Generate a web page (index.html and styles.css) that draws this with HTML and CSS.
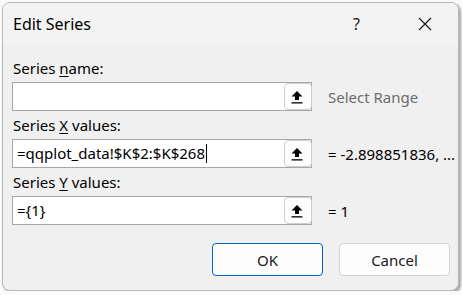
FILE: index.html
```html
<!DOCTYPE html>
<html lang="en">
<head>
	<meta charset="utf-8"/>
	<title>Edit Series</title>
	<link rel="stylesheet" href="styles.css">
</head>
<body>
	<div class="dialog">
		<div class="titlebar">
			<span class="title">Edit Series</span>
			<span class="help">?</span>
			<span class="close">
				<svg width="14" height="14" viewBox="0 0 14 14"><path d="M1 1L13 13M13 1L1 13" stroke="#1a1a1a" stroke-width="1.2" fill="none"/></svg>
			</span>
		</div>
		<div class="content">
			<div class="field">
				<label class="label">Series <u>n</u>ame:</label>
				<div class="row">
					<div class="input">
						<span class="text"></span>
						<span class="pick"><svg width="12" height="14" viewBox="0 0 12 14"><path d="M6 1L11.5 6.5H8V10H4V6.5H0.5Z" fill="#000"/><rect x="0.5" y="12.2" width="11" height="1.3" fill="#000"/></svg></span>
					</div>
					<span class="hint">Select Range</span>
				</div>
			</div>
			<div class="field">
				<label class="label">Series <u>X</u> values:</label>
				<div class="row">
					<div class="input">
						<span class="text">=qqplot_data!$K$2:$K$268<span class="caret"></span></span>
						<span class="pick"><svg width="12" height="14" viewBox="0 0 12 14"><path d="M6 1L11.5 6.5H8V10H4V6.5H0.5Z" fill="#000"/><rect x="0.5" y="12.2" width="11" height="1.3" fill="#000"/></svg></span>
					</div>
					<span class="value">= -2.898851836, ...</span>
				</div>
			</div>
			<div class="field">
				<label class="label">Series <u>Y</u> values:</label>
				<div class="row">
					<div class="input">
						<span class="text">={1}</span>
						<span class="pick"><svg width="12" height="14" viewBox="0 0 12 14"><path d="M6 1L11.5 6.5H8V10H4V6.5H0.5Z" fill="#000"/><rect x="0.5" y="12.2" width="11" height="1.3" fill="#000"/></svg></span>
					</div>
					<span class="value">= 1</span>
				</div>
			</div>
			<div class="buttons">
				<button class="btn btn-default">OK</button>
				<button class="btn">Cancel</button>
			</div>
		</div>
	</div>
</body>
</html>
```
FILE: styles.css
```css
* {
	box-sizing: border-box;
}
body {
	margin: 0;
	background: #fafafa;
	font-family: 'Noto Sans', 'Open Sans', sans-serif;
	font-size: 14px;
	color: #000;
}
.dialog {
	margin: 2px 0 0 2px;
	width: 457px;
	height: 289px;
	background: #f0f0f0;
	border: 1px solid #b9b9b9;
	border-radius: 8px;
	box-shadow: 2px 2px 3px rgba(0,0,0,.35);
	overflow: hidden;
}
.titlebar {
	height: 42px;
	background: #f3f3f3;
	display: flex;
	align-items: center;
	padding: 0 0 0 10px;
}
.title {
	font-size: 16px;
	flex: 1;
}
.help {
	font-size: 16px;
	width: 20px;
	margin-right: 45px;
	color: #1a1a1a;
}
.close {
	width: 40px;
	display: flex;
	justify-content: flex-start;
	padding-left: 0;
}
.content {
	padding: 13px 0 0 9px;
}
.field {
	margin-bottom: 4px;
}
.label {
	display: block;
	height: 20px;
	line-height: 20px;
	font-size: 15px;
	margin-bottom: 4px;
	padding-left: 1px;
}
.label u {
	text-underline-offset: 2px;
}
.row {
	display: flex;
	align-items: center;
}
.input {
	width: 300px;
	height: 29px;
	background: #fff;
	border: 1px solid #a6a6a6;
	display: flex;
	align-items: stretch;
}
.input .text {
	flex: 1;
	padding-left: 4px;
	line-height: 27px;
	font-size: 15px;
	display: flex;
	align-items: center;
}
.caret {
	display: inline-block;
	width: 1px;
	height: 19px;
	background: #000;
	margin-left: 1px;
}
.pick {
	width: 28px;
	margin: 0 -1px 0 0;
	border: 1px solid #cfcfcf;
	border-radius: 4px;
	background: #fdfdfd;
	display: flex;
	align-items: center;
	padding-left: 6px;
}
.hint,
.value {
	margin-left: 16px;
	font-size: 15px;
}
.hint {
	color: #6d6d6d;
}
.buttons {
	display: flex;
	justify-content: flex-end;
	gap: 16px;
	padding: 14px 8px 0 0;
}
.btn {
	width: 111px;
	height: 33px;
	font-family: inherit;
	font-size: 15px;
	background: #fdfdfd;
	border: 1px solid #d3d3d3;
	border-radius: 4px;
	color: #1a1a1a;
}
.btn-default {
	border-color: #0067c0;
}
```
